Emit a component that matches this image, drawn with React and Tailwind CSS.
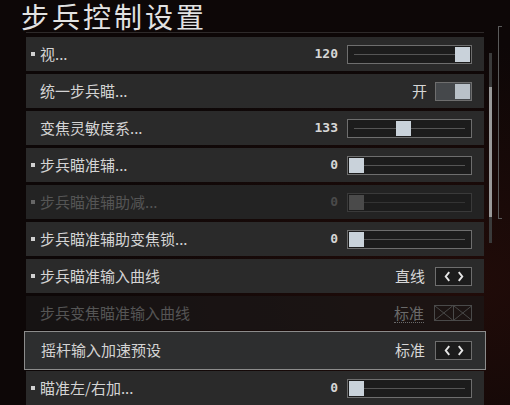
import React from 'react';

const CJK = { fontFamily: '"Noto Sans CJK SC", "Noto Sans", sans-serif' };

function Slider({ value, pos, disabled }) {
  return (
    <div className="flex items-center">
      <span
        className={`mr-[9px] text-[13px] font-bold ${disabled ? 'text-[#4a4a4a]' : 'text-[#d6d6d6]'}`}
        style={{ fontFamily: '"DejaVu Sans Mono", monospace' }}
      >
        {value}
      </span>
      <div
        className={`relative h-[19px] w-[125px] border ${disabled ? 'border-[#3a3a3a]' : 'border-[#6e6e6e]'} bg-[#1c1c1c]`}
      >
        <div className={`absolute left-[6px] right-[6px] top-[8px] h-px ${disabled ? 'bg-[#333]' : 'bg-[#555]'}`} />
        <div
          className={`absolute top-[1px] h-[15px] w-[15px] ${disabled ? 'bg-[#4a4a4a]' : 'bg-[#c9d2da]'}`}
          style={{ left: `calc(${pos * 100}% - ${pos * 17}px + 1px)` }}
        />
      </div>
    </div>
  );
}

function Toggle({ label }) {
  return (
    <div className="flex items-center">
      <span className="mr-[8px] text-[15px] text-[#d6d6d6]" style={CJK}>{label}</span>
      <div className="flex h-[19px] w-[37px] border border-[#6e6e6e] bg-[#45484b] p-[1px]">
        <div className="flex-1" />
        <div className="h-full w-[15px] bg-[#b9c1c8]" />
      </div>
    </div>
  );
}

function Chevrons({ label, disabled }) {
  return (
    <div className="flex items-center">
      <span
        className={`mr-[10px] text-[15px] ${disabled ? 'text-[#6a6a6a] border-b border-dotted border-[#6a6a6a] leading-[18px]' : 'text-[#d6d6d6]'}`}
        style={CJK}
      >
        {label}
      </span>
      {disabled ? (
        <div className="flex h-[16px] w-[38px] border border-[#4a4a4a]">
          {[0, 1].map((i) => (
            <svg key={i} viewBox="0 0 18 14" className={`h-full flex-1 ${i === 0 ? 'border-r border-[#4a4a4a]' : ''}`} preserveAspectRatio="none">
              <path d="M0 0 L18 14 M18 0 L0 14" stroke="#4a4a4a" strokeWidth="1" />
            </svg>
          ))}
        </div>
      ) : (
        <div className="flex h-[19px] w-[37px] items-center justify-center gap-[6px] border border-[#6e6e6e] bg-[#1c1c1c]">
          <svg viewBox="0 0 8 12" className="h-[11px] w-[7px]">
            <path d="M6 1 L2 6 L6 11" stroke="#e6e6e6" strokeWidth="2.2" fill="none" />
          </svg>
          <svg viewBox="0 0 8 12" className="h-[11px] w-[7px]">
            <path d="M2 1 L6 6 L2 11" stroke="#e6e6e6" strokeWidth="2.2" fill="none" />
          </svg>
        </div>
      )}
    </div>
  );
}

function Row({ label, bullet, disabled, selected, dim, children }) {
  const bg = selected ? 'bg-[#2d2e2f]' : dim ? 'bg-[#1b1818]/70' : disabled ? 'bg-[#232323]' : 'bg-[#2a2a2a]';
  return (
    <div
      className={`flex shrink-0 items-center pr-[12px] ${bg} ${
        selected ? '-mx-[2px] -my-[2px] h-[39px] border border-[#8c8c8c] pl-[7px] pr-[13px]' : 'h-[34px] pl-[5px]'
      }`}
    >
      {bullet ? (
        <div className={`mr-[5px] h-[4px] w-[4px] ${disabled ? 'bg-[#666]' : 'bg-[#d0d0d0]'}`} />
      ) : (
        <div className="w-[9px]" />
      )}
      <span
        className={`flex-1 text-[15px] ${disabled ? 'text-[#555]' : 'text-[#d4d4d4]'}`}
        style={CJK}
      >
        {label}
      </span>
      {children}
    </div>
  );
}

export default function App() {
  return (
    <div className="relative h-[405px] w-[510px] overflow-hidden bg-[#0d0707]" style={CJK}>
      <div className="absolute inset-0 bg-[radial-gradient(ellipse_at_90%_70%,rgba(70,20,12,0.35),transparent_60%)]" />
      <div className="relative flex h-full">
        <div className="ml-[26px] flex w-[458px] flex-col">
          <div className="flex h-[36px] items-start border-b border-[#2e2a2a]">
            <h1 className="-ml-[5px] text-[28px] leading-[32px] tracking-[3px] text-[#e2e2e2]">步兵控制设置</h1>
          </div>
          <div className="mt-[4px] flex flex-col gap-[3px]">
            <Row label="视..." bullet>
              <Slider value="120" pos={1} />
            </Row>
            <Row label="统一步兵瞄...">
              <Toggle label="开" />
            </Row>
            <Row label="变焦灵敏度系...">
              <Slider value="133" pos={0.44} />
            </Row>
            <Row label="步兵瞄准辅..." bullet>
              <Slider value="0" pos={0} />
            </Row>
            <Row label="步兵瞄准辅助减..." bullet disabled>
              <Slider value="0" pos={0} disabled />
            </Row>
            <Row label="步兵瞄准辅助变焦锁..." bullet>
              <Slider value="0" pos={0} />
            </Row>
            <Row label="步兵瞄准输入曲线" bullet>
              <Chevrons label="直线" />
            </Row>
            <Row label="步兵变焦瞄准输入曲线" disabled dim>
              <Chevrons label="标准" disabled />
            </Row>
            <Row label="摇杆输入加速预设" selected>
              <Chevrons label="标准" />
            </Row>
            <Row label="瞄准左/右加..." bullet>
              <Slider value="0" pos={0} />
            </Row>
          </div>
        </div>
        <div className="ml-[5px] mt-[53px] flex h-[190px] w-[3px] flex-col bg-[#3a3a3a]">
          <div className="mt-[34px] h-[130px] w-full bg-[#9a9a9a]" />
        </div>
        <div className="ml-[6px] mt-[26px] h-[193px] w-[4px] border-y border-l border-[#5a5a5a]" />
      </div>
    </div>
  );
}
